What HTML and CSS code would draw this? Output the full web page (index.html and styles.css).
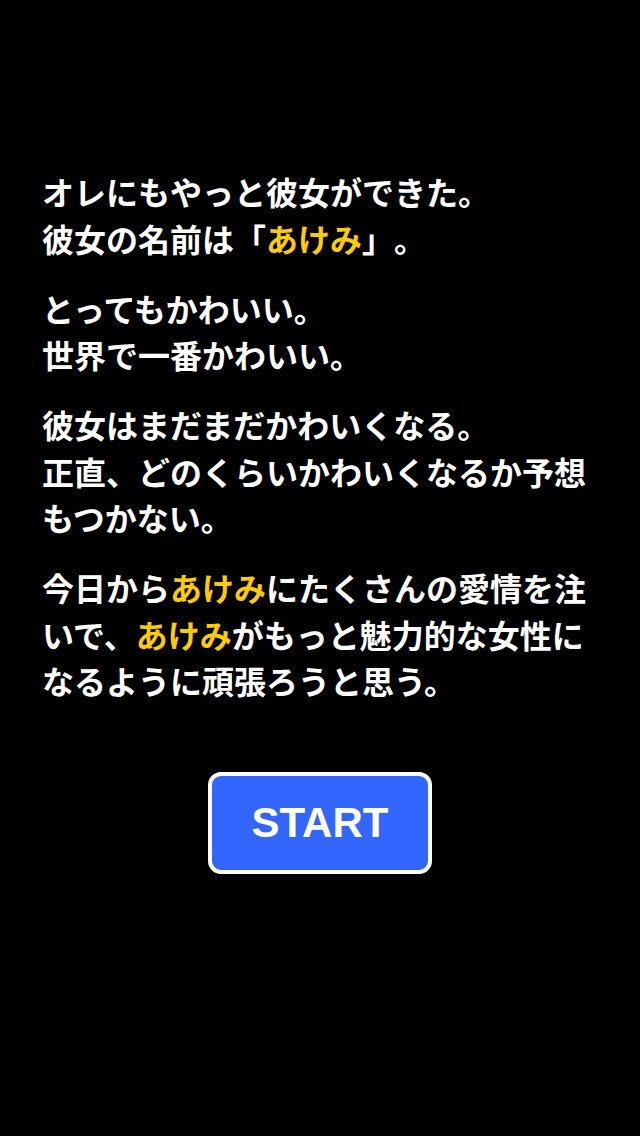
FILE: index.html
```html
<!DOCTYPE html>
<html lang="ja">
<head>
<meta charset="utf-8">
<title>あけみ</title>
<link rel="stylesheet" href="styles.css">
</head>
<body>
<main class="screen">
  <section class="story">
    <p class="para">オレにもやっと彼女ができた。<br>彼女の名前は「<span class="name">あけみ</span>」。</p>
    <p class="para">とってもかわいい。<br>世界で一番かわいい。</p>
    <p class="para">彼女はまだまだかわいくなる。<br>正直、どのくらいかわいくなるか予想もつかない。</p>
    <p class="para">今日から<span class="name">あけみ</span>にたくさんの愛情を注いで、<span class="name">あけみ</span>がもっと魅力的な女性になるように頑張ろうと思う。</p>
  </section>
  <div class="actions">
    <button class="start" type="button">START</button>
  </div>
</main>
</body>
</html>
```
FILE: styles.css
```css
html, body {
  margin: 0;
  padding: 0;
  background: #000;
}
.screen {
  width: 640px;
  height: 1136px;
  background: #000;
  display: flex;
  flex-direction: column;
  align-items: flex-start;
  padding-top: 168px;
  box-sizing: border-box;
}
.story {
  margin-left: 42px;
  width: 546px;
  display: flex;
  flex-direction: column;
  gap: 23.5px;
}
.para {
  margin: 0;
  color: #fff;
  font-family: "Noto Sans CJK JP", "Noto Sans", sans-serif;
  font-weight: 700;
  font-size: 32px;
  line-height: 46.5px;
  line-break: strict;
  text-spacing-trim: space-all;
}
.name {
  color: #ffcc00;
}
.actions {
  width: 640px;
  display: flex;
  justify-content: center;
  margin-top: 68px;
}
.start {
  width: 224px;
  height: 102px;
  box-sizing: border-box;
  border: 4px solid #fff;
  border-radius: 13px;
  background: #3366ff;
  color: #fff;
  font-family: "Liberation Sans", Arial, sans-serif;
  font-weight: 700;
  font-size: 42px;
  padding: 0;
  margin: 0;
  cursor: pointer;
}
```
